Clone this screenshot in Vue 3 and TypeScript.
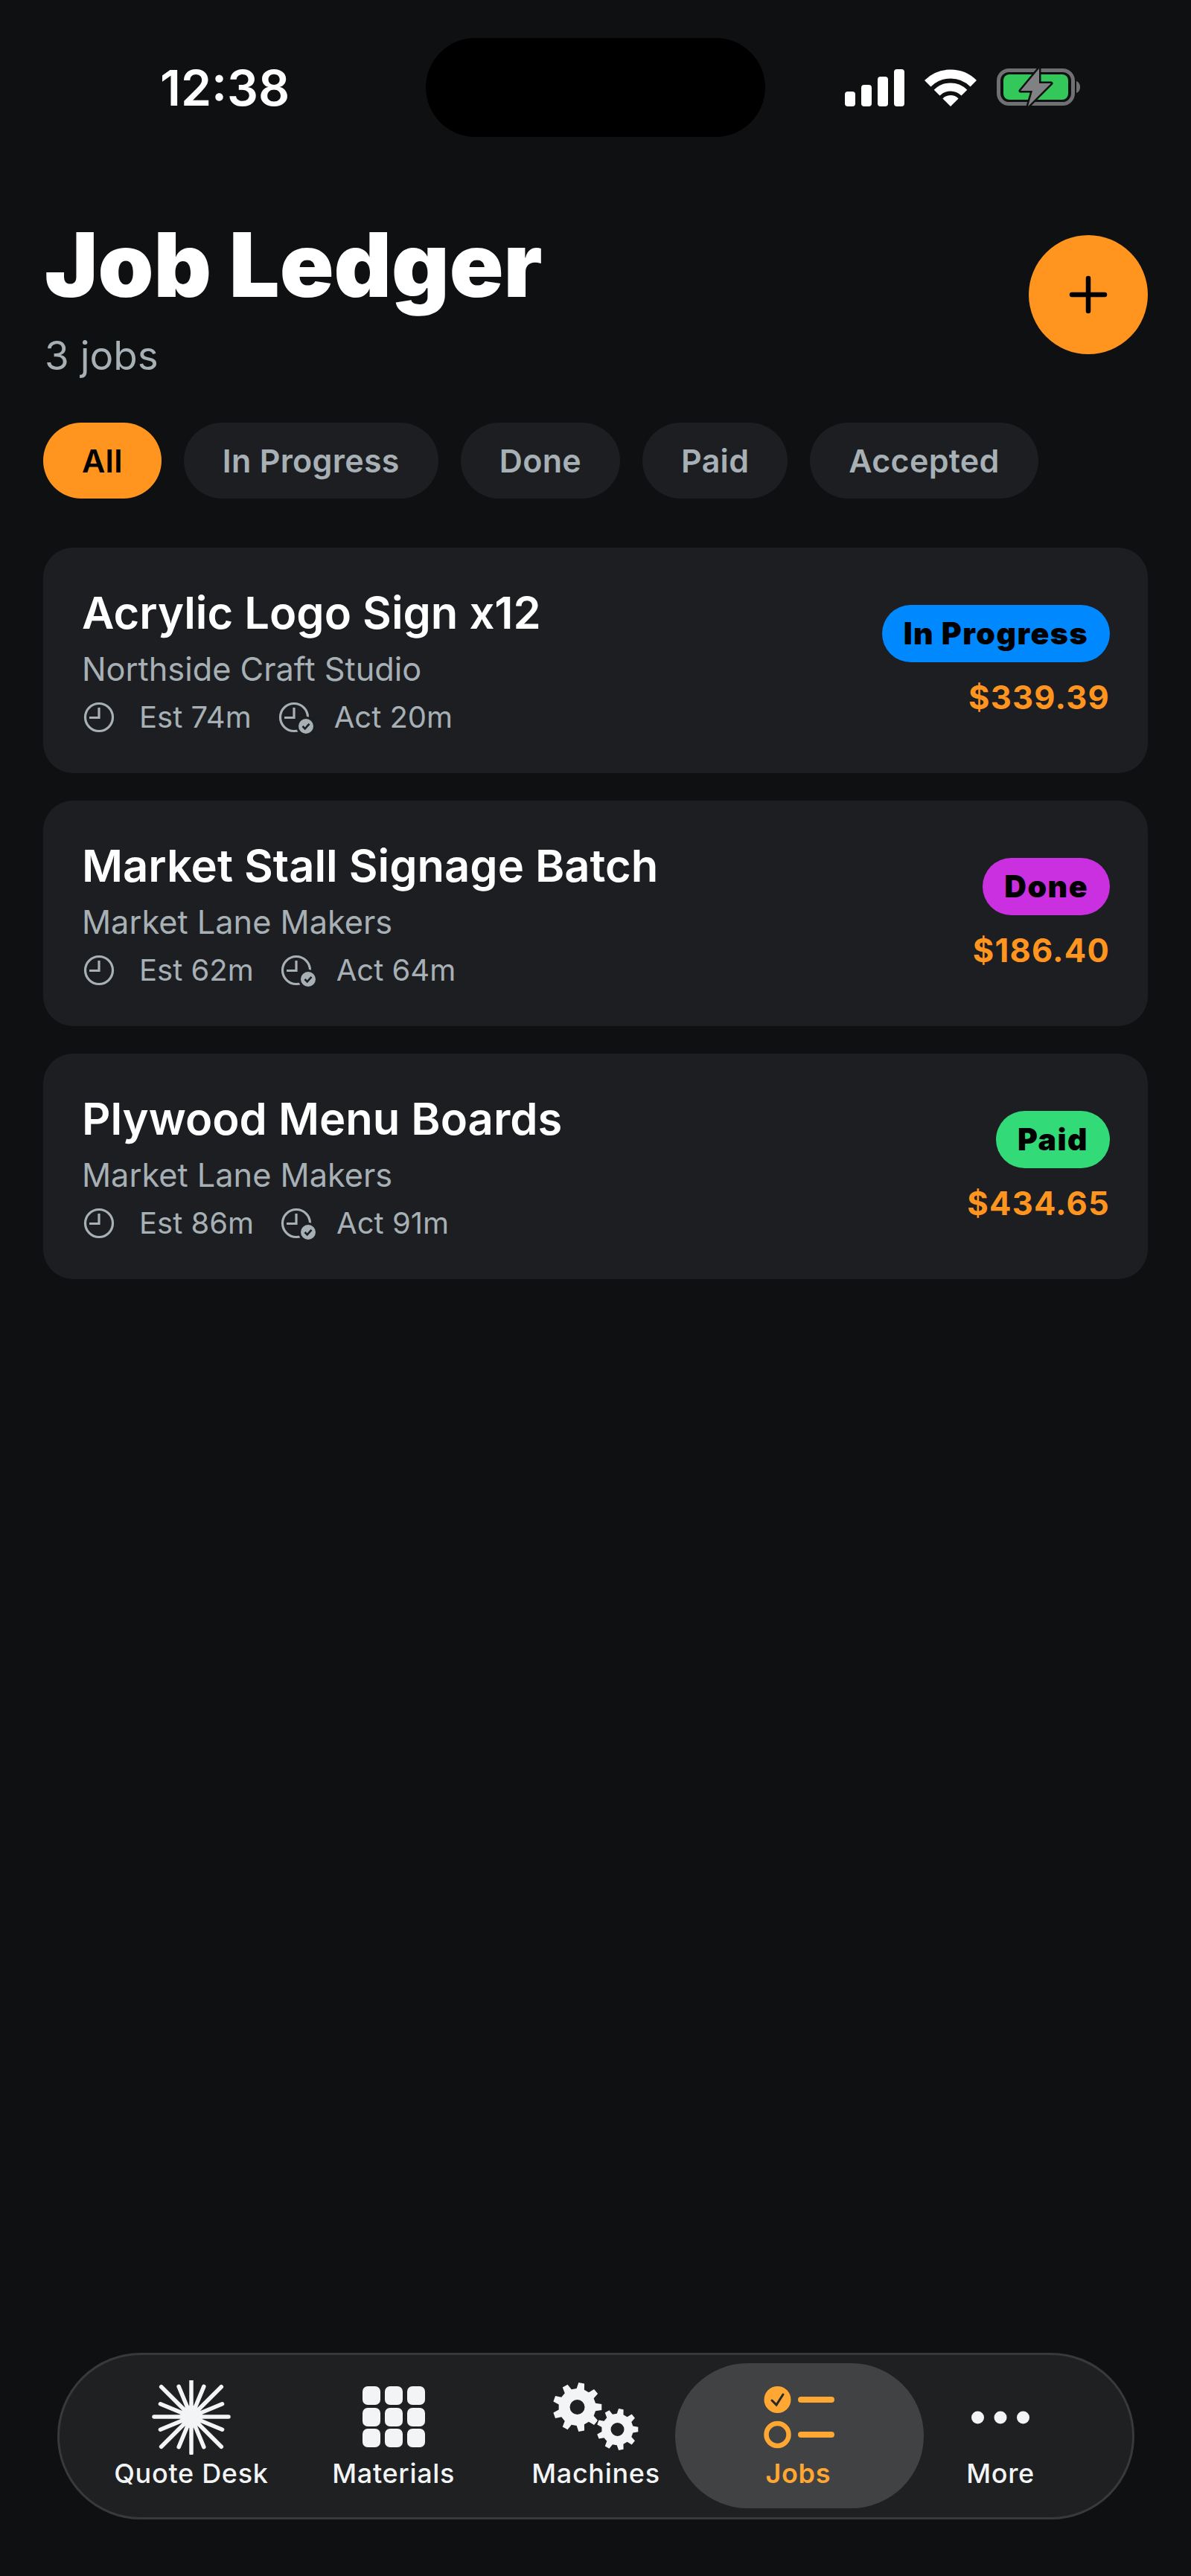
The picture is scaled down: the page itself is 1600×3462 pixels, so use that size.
<template>
  <div class="page">
    <div class="status">
      <span class="time">12:38</span>
      <div class="island"></div>
      <div class="status-icons">
        <svg width="80" height="50" viewBox="0 0 80 50" fill="#fff">
          <rect x="0" y="30" width="14" height="20" rx="4" />
          <rect x="22" y="21" width="14" height="29" rx="4" />
          <rect x="44" y="10" width="14" height="40" rx="4" />
          <rect x="66" y="0" width="14" height="50" rx="4" />
        </svg>
        <svg width="70" height="51" viewBox="0 0 70 51" fill="none" stroke="#fff">
          <path d="M4.2 20.2A43.5 43.5 0 0 1 65.8 20.2" stroke-width="12" />
          <path d="M16.6 32.6A26 26 0 0 1 53.4 32.6" stroke-width="11" />
          <path d="M35 51L24.4 40.4A15 15 0 0 1 45.6 40.4Z" fill="#fff" stroke="none" />
        </svg>
        <svg width="113" height="53" viewBox="0 0 113 53">
          <rect x="2.5" y="3.5" width="100" height="45" rx="14" fill="none" stroke="#6f7072" stroke-width="5" />
          <rect x="9" y="9" width="87" height="34" rx="8" fill="#34c759" />
          <path d="M107 18c3 1 5 4 5 8s-2 7-5 8Z" fill="#6f7072" />
          <path d="M57 1L32 31H48L42 52L73 21H57Z" fill="#808183" stroke="#0e1012" stroke-width="5" stroke-linejoin="round" paint-order="stroke" />
        </svg>
      </div>
    </div>

    <header class="head">
      <div>
        <h1 class="title">Job Ledger</h1>
        <p class="count">3 jobs</p>
      </div>
      <button class="add">
        <svg width="54" height="54" viewBox="0 0 54 54" stroke="#000" stroke-width="6.5" stroke-linecap="round">
          <path d="M27 5V49M5 27H49" />
        </svg>
      </button>
    </header>

    <div class="chips">
      <span v-for="(c, i) in chips" :key="c" class="chip" :class="{ on: i === 0 }">{{ c }}</span>
    </div>

    <div class="cards">
      <div v-for="job in jobs" :key="job.name" class="card">
        <div class="card-main">
          <div class="job-name">{{ job.name }}</div>
          <div class="client">{{ job.client }}</div>
          <div class="meta">
            <span class="meta-item first">
              <svg width="46" height="46" viewBox="0 0 46 46" fill="none" stroke="#a7b0b5" stroke-width="3.2">
                <circle cx="23" cy="23" r="18.5" />
                <path d="M23 10V23.5H10" />
              </svg>
              Est {{ job.est }}m
            </span>
            <span class="meta-item">
              <svg width="50" height="46" viewBox="0 0 50 46" fill="none" stroke="#a7b0b5" stroke-width="3.2">
                <circle cx="23" cy="23" r="18.5" />
                <path d="M23 10V23.5H10" />
                <circle cx="39" cy="35" r="11.5" fill="#a7b0b5" stroke="#1c1e22" stroke-width="3" />
                <path d="M34.5 35l3.2 3.4 5.8-6.6" stroke="#1c1e22" stroke-width="2.6" />
              </svg>
              Act {{ job.act }}m
            </span>
          </div>
        </div>
        <div class="card-side">
          <span class="badge" :style="{ background: job.color }">{{ job.status }}</span>
          <span class="price">{{ job.price }}</span>
        </div>
      </div>
    </div>

    <nav class="tabbar">
      <div class="tab">
        <svg class="tab-icon" width="120" height="100" viewBox="0 0 120 100">
          <line
            v-for="s in spokes"
            :key="s.a"
            x1="60"
            y1="49"
            :x2="s.x"
            :y2="s.y"
            stroke="#f2f4f5"
            stroke-width="5.5"
            stroke-linecap="round"
          />
          <circle cx="60" cy="49" r="15" fill="#f2f4f5" />
        </svg>
        <span>Quote Desk</span>
      </div>
      <div class="tab">
        <svg class="tab-icon" width="120" height="100" viewBox="0 0 120 100" fill="#f2f4f5">
          <template v-for="y in [8, 37, 65]" :key="y">
            <rect v-for="x in [18, 48, 78]" :key="x" :x="x" :y="y" width="24" height="25" rx="7" />
          </template>
        </svg>
        <span>Materials</span>
      </div>
      <div class="tab">
        <svg class="tab-icon" width="120" height="100" viewBox="0 0 120 100">
          <path :d="bigGear" fill="#f2f4f5" fill-rule="evenodd" />
          <path :d="smallGear" fill="#f2f4f5" fill-rule="evenodd" stroke="#1e2022" stroke-width="3" paint-order="stroke" />
        </svg>
        <span>Machines</span>
      </div>
      <div class="tab active">
        <svg class="tab-icon" width="120" height="100" viewBox="0 0 120 100" fill="none" stroke="#ffa733" stroke-width="8" stroke-linecap="round">
          <circle cx="32.5" cy="26" r="18" fill="#ffa733" stroke="none" />
          <path d="M25 27l6 6 9-14" stroke="#26282a" stroke-width="3" />
          <circle cx="32.5" cy="73" r="15" stroke-width="6.5" />
          <path d="M64 26H105M64 73H105" />
        </svg>
        <span>Jobs</span>
      </div>
      <div class="tab">
        <svg class="tab-icon" width="120" height="100" viewBox="0 0 120 100" fill="#f2f4f5">
          <circle cx="29.5" cy="50" r="8.5" />
          <circle cx="60" cy="50" r="8.5" />
          <circle cx="90.5" cy="50" r="8.5" />
        </svg>
        <span>More</span>
      </div>
    </nav>
  </div>
</template>

<script setup lang="ts">
const chips = ['All', 'In Progress', 'Done', 'Paid', 'Accepted'];

const jobs = [
  { name: 'Acrylic Logo Sign x12', client: 'Northside Craft Studio', est: 74, act: 20, status: 'In Progress', color: '#0088ff', price: '$339.39' },
  { name: 'Market Stall Signage Batch', client: 'Market Lane Makers', est: 62, act: 64, status: 'Done', color: '#cb30e0', price: '$186.40' },
  { name: 'Plywood Menu Boards', client: 'Market Lane Makers', est: 86, act: 91, status: 'Paid', color: '#33da78', price: '$434.65' },
];

// sunburst: 16 spokes, long on the diagonals, short next to them
const spokeLen = [49, 44, 57, 45, 50, 45, 57, 44];
const spokes = Array.from({ length: 16 }, (_, i) => {
  const a = (i * Math.PI) / 8;
  const len = spokeLen[i % 8];
  return { a: i, x: 60 + Math.sin(a) * len, y: 49 - Math.cos(a) * len };
});

function gear(cx: number, cy: number, r: number, hole: number, teeth: number): string {
  const root = r * 0.76;
  const step = (Math.PI * 2) / teeth;
  let d = '';
  for (let i = 0; i < teeth; i++) {
    const a = i * step;
    const pts: [number, number][] = [
      [root, a - step * 0.3],
      [r, a - step * 0.17],
      [r, a + step * 0.17],
      [root, a + step * 0.3],
    ];
    for (const [rad, ang] of pts) {
      d += `${d ? 'L' : 'M'}${(cx + Math.cos(ang) * rad).toFixed(2)} ${(cy + Math.sin(ang) * rad).toFixed(2)}`;
    }
  }
  d += `Z M${cx - hole} ${cy}a${hole} ${hole} 0 1 0 ${hole * 2} 0a${hole} ${hole} 0 1 0 ${-hole * 2} 0Z`;
  return d;
}

const bigGear = gear(35.5, 36, 33, 10, 9);
const smallGear = gear(89.5, 66, 28, 9, 9);
</script>

<style>
html,
body {
  margin: 0;
  background: #0e1012;
}
</style>

<style scoped>
* {
  box-sizing: border-box;
}

.page {
  display: flex;
  flex-direction: column;
  min-height: 3462px;
  background: #0e1012;
  color: #fff;
  font-family: Inter, 'Noto Sans', sans-serif;
}

.status {
  display: flex;
  align-items: center;
  padding: 51px 0 0 215px;
}

.time {
  width: 357px;
  font-size: 66px;
  font-weight: 600;
  line-height: 80px;
}

.island {
  width: 456px;
  height: 133px;
  border-radius: 67px;
  background: #000;
}

.status-icons {
  display: flex;
  align-items: center;
  gap: 27px;
  margin-left: 107px;
}

.head {
  display: flex;
  justify-content: space-between;
  align-items: flex-start;
  margin-top: 112px;
  padding: 0 58px 0 60px;
}

.title {
  margin: 0;
  font-size: 120px;
  font-weight: 900;
  line-height: 120px;
}

.count {
  margin: 30px 0 0;
  font-size: 53px;
  line-height: 64px;
  color: #a7b0b5;
}

.add {
  display: flex;
  align-items: center;
  justify-content: center;
  width: 160px;
  height: 160px;
  margin-top: 20px;
  padding: 0;
  border: none;
  border-radius: 50%;
  background: #ff951f;
}

.chips {
  display: flex;
  gap: 30px;
  margin-top: 58px;
  padding-left: 58px;
}

.chip {
  display: flex;
  align-items: center;
  height: 102px;
  padding: 0 52px;
  border-radius: 51px;
  background: #1c1e21;
  color: #a7b0b5;
  font-size: 43px;
  font-weight: 600;
  letter-spacing: 0.3px;
}

.chip.on {
  background: #ff951f;
  color: #000;
}

.cards {
  display: flex;
  flex-direction: column;
  gap: 37px;
  margin-top: 66px;
  padding: 0 58px;
}

.card {
  display: flex;
  justify-content: space-between;
  align-items: center;
  padding: 51px 51px 51px 52px;
  border-radius: 40px;
  background: #1c1e22;
}

.job-name {
  font-size: 59.7px;
  font-weight: 600;
  line-height: 72px;
}

.client {
  margin-top: 14px;
  font-size: 43.3px;
  line-height: 52px;
  color: #a7b0b5;
}

.meta {
  display: flex;
  gap: 34px;
  margin-top: 15px;
  font-size: 40px;
  line-height: 48px;
  color: #a7b0b5;
}

.meta-item {
  display: flex;
  align-items: center;
  gap: 27px;
}

.meta-item.first {
  gap: 31px;
}

.card-side {
  display: flex;
  flex-direction: column;
  align-items: flex-end;
  gap: 21px;
}

.badge {
  display: flex;
  align-items: center;
  height: 77px;
  padding: 0 29px;
  border-radius: 39px;
  color: #000;
  font-size: 41px;
  font-weight: 900;
  letter-spacing: 1.5px;
}

.price {
  font-size: 43.5px;
  font-weight: 700;
  letter-spacing: 1.2px;
  line-height: 52px;
  color: #ff951f;
}

.tabbar {
  display: flex;
  height: 224px;
  margin: auto 76px 76px 77px;
  padding: 0 41px;
  border: 3px solid #37393b;
  border-radius: 112px;
  background: #1e2022;
}

.tab {
  position: relative;
  display: flex;
  flex: 1;
  flex-direction: column;
  align-items: center;
  padding-top: 34px;
  font-size: 36px;
  font-weight: 500;
  letter-spacing: 0.7px;
  line-height: 42px;
  color: #f2f4f5;
}

.tab-icon {
  position: relative;
  margin-bottom: 4px;
}

.tab span {
  position: relative;
}

.tab.active {
  color: #ffa733;
  font-weight: 600;
}

.tab.active::before {
  content: '';
  position: absolute;
  top: 11px;
  bottom: 12px;
  left: -29px;
  right: -33px;
  border-radius: 98px;
  background: #404244;
}
</style>
